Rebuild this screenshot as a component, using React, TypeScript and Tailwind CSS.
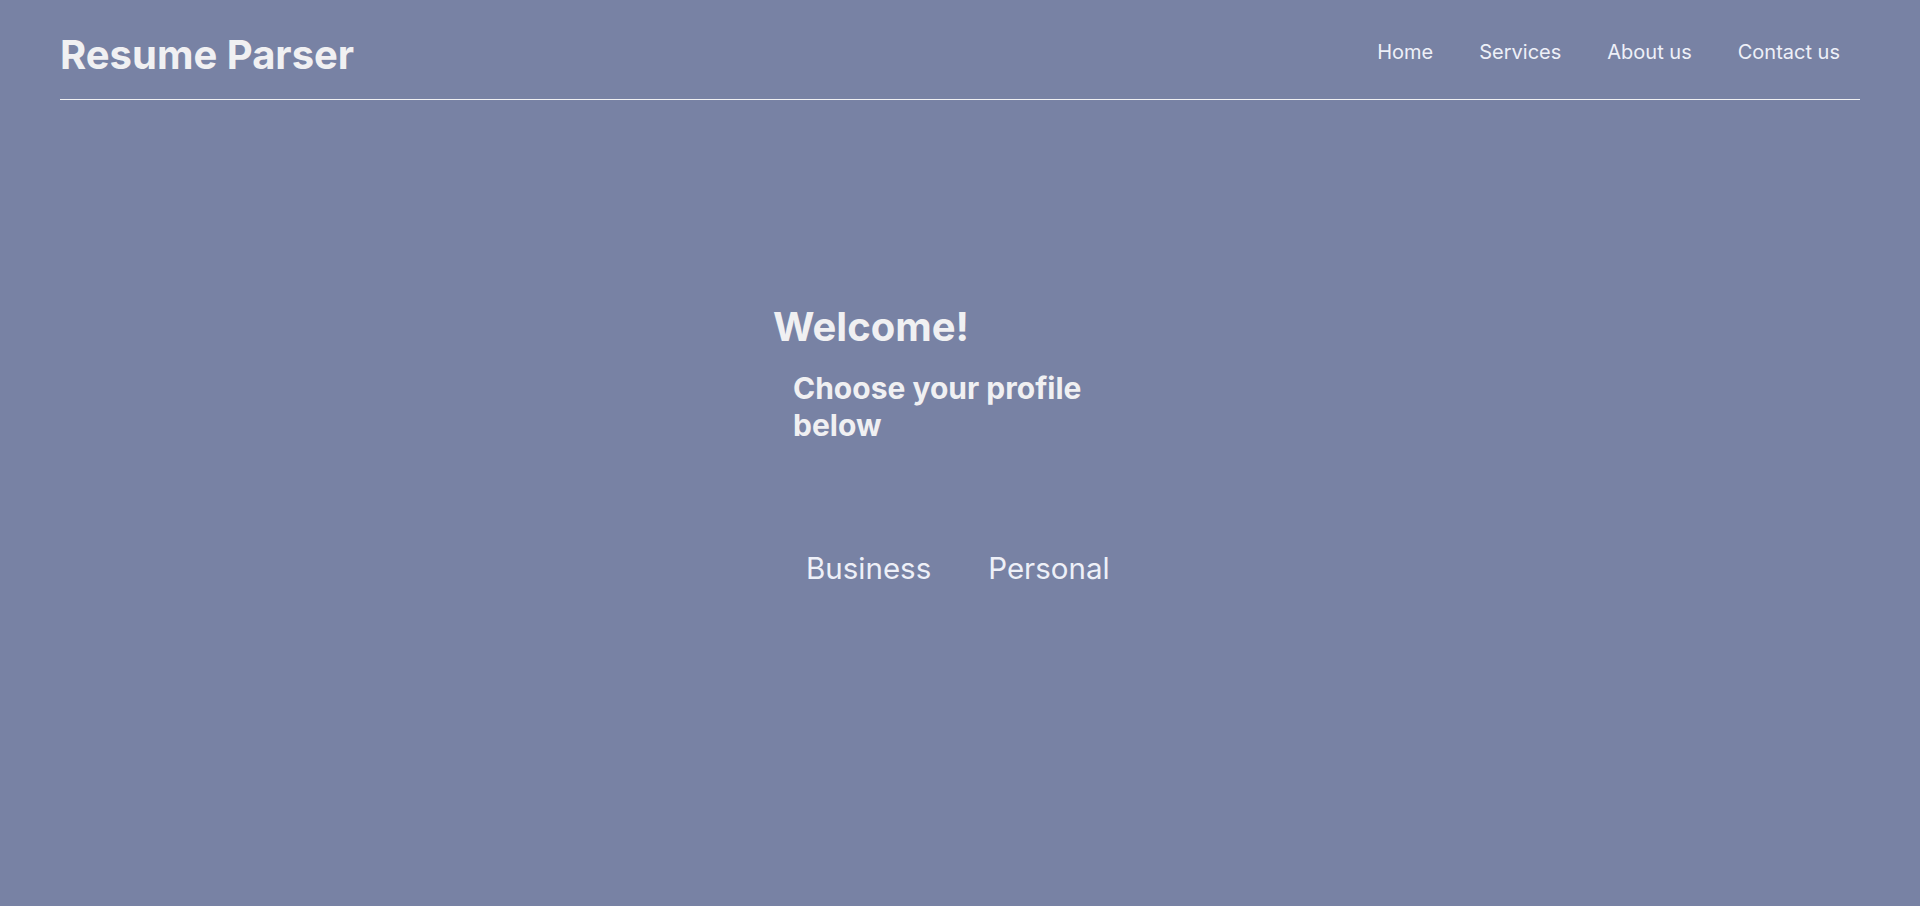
export default function App() {
	const links = ['Home', 'Services', 'About us', 'Contact us']
	return (
		<div className="min-h-screen w-full bg-[#7882a4] font-['Inter','Noto_Sans',sans-serif] text-[#f0f0f2]">
			{/* header */}
			<header className="px-[60px]">
				<div className="flex items-start justify-between border-b border-[#f0f0f2] h-[100px]">
					<h1 className="mt-[35px] text-[40px] font-bold leading-none">Resume Parser</h1>
					<nav className="flex gap-[46px] pr-[20px] mt-[42px]">
						{links.map(l => (
							<a key={l} href="#" className="text-[20px] leading-none text-[#eef0f8]">
								{l}
							</a>
						))}
					</nav>
				</div>
			</header>

			{/* main */}
			<main className="flex justify-center">
				<div className="w-[374px] pt-[207px]">
					<h2 className="text-[40px] font-bold leading-none">Welcome!</h2>
					<h3 className="pl-[20px] pr-[40px] mt-[23px] text-[30px] font-bold leading-[37px]">
						Choose your profile below
					</h3>
					<div className="flex gap-[57px] pl-[33px] mt-[110px]">
						<button type="button" className="text-[29.5px] leading-none text-[#eef0f8]">Business</button>
						<button type="button" className="text-[29.5px] leading-none text-[#eef0f8]">Personal</button>
					</div>
				</div>
			</main>
		</div>
	)
}
